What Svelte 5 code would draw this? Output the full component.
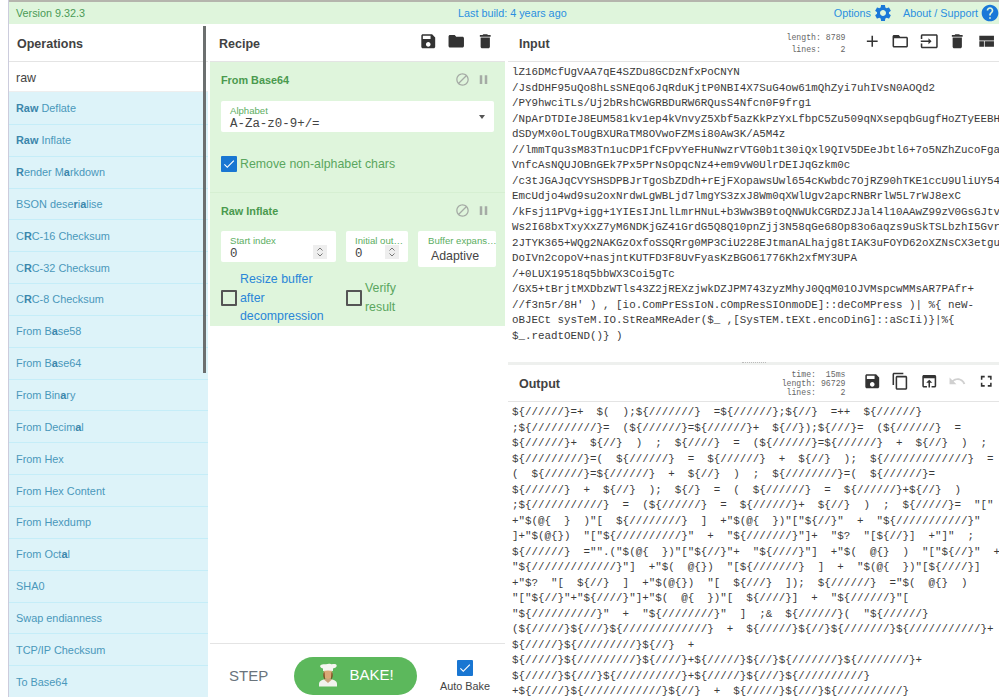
<script>
    const icons = {
        save: 'M17 3H5c-1.11 0-2 .9-2 2v14c0 1.1.89 2 2 2h14c1.1 0 2-.9 2-2V7l-4-4zm-5 16c-1.66 0-3-1.34-3-3s1.34-3 3-3 3 1.34 3 3-1.34 3-3 3zm3-10H5V5h10v4z',
        folder: 'M10 4H4c-1.1 0-1.99.9-1.99 2L2 18c0 1.1.9 2 2 2h16c1.1 0 2-.9 2-2V8c0-1.1-.9-2-2-2h-8l-2-2z',
        trash: 'M6 19c0 1.1.9 2 2 2h8c1.1 0 2-.9 2-2V7H6v12zM19 4h-3.5l-1-1h-5l-1 1H5v2h14V4z',
        add: 'M19 13h-6v6h-2v-6H5v-2h6V5h2v6h6v2z',
        folderOpen: 'M20 6h-8l-2-2H4c-1.1 0-1.99.9-1.99 2L2 18c0 1.1.9 2 2 2h16c1.1 0 2-.9 2-2V8c0-1.1-.9-2-2-2zm0 12H4V8h16v10z',
        input: 'M21 3.01H3c-1.1 0-2 .9-2 2V9h2V4.99h18v14.03H3V15H1v4.01c0 1.1.9 1.98 2 1.98h18c1.1 0 2-.88 2-1.98v-14c0-1.11-.9-2-2-2zM11 16l4-4-4-4v3H1v2h10v3z',
        layout: 'M3 19h6v-7H3v7zm7 0h12v-7H10v7zM3 5v6h19V5H3z',
        copy: 'M16 1H4c-1.1 0-2 .9-2 2v14h2V3h12V1zm3 4H8c-1.1 0-2 .9-2 2v14c0 1.1.9 2 2 2h11c1.1 0 2-.9 2-2V7c0-1.1-.9-2-2-2zm0 16H8V7h11v14z',
        openIn: 'M19 4H5c-1.11 0-2 .9-2 2v12c0 1.1.89 2 2 2h4v-2H5V8h14v10h-4v2h4c1.1 0 2-.9 2-2V6c0-1.1-.89-2-2-2zm-7 6l-4 4h3v6h2v-6h3l-4-4z',
        undo: 'M12.5 8c-2.65 0-5.05.99-6.9 2.6L2 7v9h9l-3.62-3.62c1.39-1.16 3.16-1.88 5.12-1.88 3.54 0 6.55 2.31 7.6 5.5l2.37-.78C21.08 11.03 17.15 8 12.5 8z',
        fullscreen: 'M7 14H5v5h5v-2H7v-3zm-2-4h2V7h3V5H5v5zm12 7h-3v2h5v-5h-2v3zM14 5v2h3v3h2V5h-5z',
        block: 'M12 2C6.48 2 2 6.48 2 12s4.48 10 10 10 10-4.48 10-10S17.52 2 12 2zM4 12c0-4.42 3.58-8 8-8 1.85 0 3.55.63 4.9 1.69L5.69 16.9C4.63 15.55 4 13.85 4 12zm8 8c-1.85 0-3.55-.63-4.9-1.69L18.31 7.1C19.37 8.45 20 10.15 20 12c0 4.42-3.58 8-8 8z',
        pause: 'M6 19h4V5H6v14zm8-14v14h4V5h-4z',
        settings: 'M19.14 12.94c.04-.3.06-.61.06-.94 0-.32-.02-.64-.07-.94l2.03-1.58c.18-.14.23-.41.12-.61l-1.92-3.32c-.12-.22-.37-.29-.59-.22l-2.39.96c-.5-.38-1.03-.7-1.62-.94l-.36-2.54c-.04-.24-.24-.41-.48-.41h-3.84c-.24 0-.43.17-.47.41l-.36 2.54c-.59.24-1.13.57-1.62.94l-2.39-.96c-.22-.08-.47 0-.59.22L2.74 8.87c-.12.21-.08.47.12.61l2.03 1.58c-.05.3-.09.63-.09.94s.02.64.07.94l-2.03 1.58c-.18.14-.23.41-.12.61l1.92 3.32c.12.22.37.29.59.22l2.39-.96c.5.38 1.03.7 1.62.94l.36 2.54c.05.24.24.41.48.41h3.84c.24 0 .44-.17.47-.41l.36-2.54c.59-.24 1.13-.56 1.62-.94l2.39.96c.22.08.47 0 .59-.22l1.92-3.32c.12-.22.07-.47-.12-.61l-2.01-1.58zM12 15.6c-1.98 0-3.6-1.62-3.6-3.6s1.62-3.6 3.6-3.6 3.6 1.62 3.6 3.6-1.62 3.6-3.6 3.6z',
        help: 'M12 2C6.48 2 2 6.48 2 12s4.48 10 10 10 10-4.48 10-10S17.52 2 12 2zm1 17h-2v-2h2v2zm2.07-7.75l-.9.92C13.45 12.9 13 13.5 13 15h-2v-.5c0-1.1.45-2.1 1.17-2.83l1.24-1.26c.37-.36.59-.86.59-1.41 0-1.1-.9-2-2-2s-2 .9-2 2H8c0-2.21 1.79-4 4-4s4 1.79 4 4c0 .88-.36 1.68-.93 2.25z',
        check: 'M9 16.2L4.8 12l-1.4 1.4L9 19 21 7l-1.4-1.4L9 16.2z'
    };

    // each op is split into plain / matched pieces, odd indexes are bold
    const operations = [
        ['', 'Raw', ' Deflate'],
        ['', 'Raw', ' Inflate'],
        ['', 'R', 'ender M', 'a', 'rkdown'],
        ['BSON dese', 'r', 'i', 'a', 'lise'],
        ['C', 'R', 'C-16 Checksum'],
        ['C', 'R', 'C-32 Checksum'],
        ['C', 'R', 'C-8 Checksum'],
        ['From B', 'a', 'se58'],
        ['From B', 'a', 'se64'],
        ['From Bin', 'a', 'ry'],
        ['From Decim', 'a', 'l'],
        ['From Hex'],
        ['From Hex Content'],
        ['From Hexdump'],
        ['From Oct', 'a', 'l'],
        ['SHA0'],
        ['Swap endianness'],
        ['TCP/IP Checksum'],
        ['To Base64']
    ];

    const inputLines = [
        'lZ16DMcfUgVAA7qE4SZDu8GCDzNfxPoCNYN',
        '/JsdDHF95uQo8hLsSNEqo6JqRduKjtP0NBI4X7SuG4ow61mQhZyi7uhIVsN0AOQd2',
        '/PY9hwciTLs/Uj2bRshCWGRBDuRW6RQusS4Nfcn0F9frg1',
        '/NpArDTDIeJ8EUM581kv1ep4kVnvyZ5Xbf5azKkPzYxLfbpC5Zu509qNXsepqbGugfHoZTyEEBH',
        'dSDyMx0oLToUgBXURaTM8OVwoFZMsi80Aw3K/A5M4z',
        '//lmmTqu3sM83Tn1ucDP1fCFpvYeFHuNwzrVTG0b1t30iQxl9QIV5DEeJbtl6+7o5NZhZucoFga',
        'VnfcAsNQUJOBnGEk7Px5PrNsOpqcNz4+em9vW0UlrDEIJqGzkm0c',
        '/c3tJGAJqCVYSHSDPBJrTgoSbZDdh+rEjFXopawsUwl654cKwbdc7OjRZ90hTKE1ccU9UliUY54',
        'EmcUdjo4wd9su2oxNrdwLgWBLjd7lmgYS3zxJ8Wm0qXWlUgv2apcRNBRrlW5L7rWJ8exC',
        '/kFsj11PVg+igg+1YIEsIJnLlLmrHNuL+b3Ww3B9toQNWUkCGRDZJJal4l10AAwZ99zV0GsGJtv',
        'Ws2I68bxTxyXxZ7yM6NDKjGZ41GrdG5Q8Q10pnZjj3N58qGe68Op83o6aqzs9uSkTSLbzhI5Gvr',
        '2JTYK365+WQg2NAKGzOxfoSSQRrg0MP3CiU228EJtmanALhajg8tIAK3uFOYD62oXZNsCX3etgu',
        'DoIVn2copoV+nasjntKUTFD3F8UvFyasKzBGO61776Kh2xfMY3UPA',
        '/+0LUX19518q5bbWX3Coi5gTc',
        '/GX5+tBrjtMXDbzWTls43Z2jREXzjwkDZJPM743zyzMhyJ0QqM01OJVMspcwMMsAR7PAfr+',
        "//f3n5r/8H' ) , [io.ComPrESsIoN.cOmpResSIOnmoDE]::deCoMPress )| %{ neW-",
        'oBJECt sysTeM.IO.StReaMReAder($_ ,[SysTEM.tEXt.encoDinG]::aScIi)}|%{',
        '$_.readtOEND()} )'
    ];

    const outputLines = [
        '${//////}=+  $(  );${///////}  =${//////};${//}  =++  ${//////}',
        ';${//////////}=  (${//////}=${//////}+  ${//});${///}=  (${//////}  =',
        '${//////}+  ${//}  )  ;  ${////}  =  (${//////}=${//////}  +  ${//}  )  ;',
        '${/////////}=(  ${//////}  =  ${//////}  +  ${//}  );  ${/////////////}  =',
        '(  ${//////}=${//////}  +  ${//}  )  ;  ${////////}=(  ${//////}=',
        '${//////}  +  ${//}  );  ${/}  =  (  ${//////}  =  ${//////}+${//}  )',
        ';${///////////}  =  (${//////}  =  ${//////}+  ${//}  )  ;  ${/////}=  "["',
        '+"$(@{  }  )"[  ${////////}  ]  +"$(@{  })"["${//}"  +  "${///////////}"',
        ']+"$(@{})  "["${//////////}"  +  "${///////}"]+  "$?  "[${//}]  +"]"  ;',
        '${//////}  ="".("$(@{  })"["${//}"+  "${////}"]  +"$(  @{}  )  "["${//}"  +',
        '"${/////////////}"]  +"$(  @{})  "[${///////}  ]  +  "$(@{  })"[${////}]',
        '+"$?  "[  ${//}  ]  +"$(@{})  "[  ${///}  ]);  ${//////}  ="$(  @{}  )',
        '"["${//}"+"${////}"]+"$(  @{  })"[  ${////}]  +  "${//////}"[',
        '"${//////////}"  +  "${////////}"  ]  ;&  ${//////}(  "${//////}',
        '(${/////}${///}${/////////////}  +  ${/////}${//}${///////}${///////////}+',
        '${/////}${/////////}${//}  +',
        '${/////}${/////////}${////}+${/////}${//}${///////}${////////}+',
        '${/////}${///}${//////////}+${/////}${///}${//////////}',
        '+${/////}${////////////}${//}  +  ${/////}${///}${//////////}'
    ];
</script>

{#snippet icon(d, size, cls)}
    <svg class={cls} width={size} height={size} viewBox="0 0 24 24" fill="currentColor"><path {d} /></svg>
{/snippet}

{#snippet opHead(title)}
    <div class="op-head">
        <span class="op-title">{title}</span>
        <span class="op-icons">
            {@render icon(icons.block, 15, 'op-icon')}
            {@render icon(icons.pause, 15, 'op-icon')}
        </span>
    </div>
{/snippet}

{#snippet arrows()}
    <span class="spinner">
        <svg width="14" height="14" viewBox="0 0 14 14" fill="none" stroke="#777" stroke-width="1"><path d="M4.5 5.5 7 3l2.500 2.500M4.500 8.500 7 11l2.500-2.500" /></svg>
    </span>
{/snippet}

<div class="page">
    <div class="banner">
        <span class="version">Version 9.32.3</span>
        <span class="build">Last build: 4 years ago</span>
        <span class="links">
            <span class="link">Options {@render icon(icons.settings, 20, 'link-icon')}</span>
            <span class="link">About / Support {@render icon(icons.help, 20, 'link-icon')}</span>
        </span>
    </div>

    <div class="columns">
        <section class="ops">
            <div class="title ops-title">Operations</div>
            <div class="search">raw</div>
            <ul class="op-list">
                {#each operations as parts}
                    <li>
                        {#each parts as part, i}
                            {#if i % 2}<b>{part}</b>{:else}{part}{/if}
                        {/each}
                    </li>
                {/each}
            </ul>
            <div class="scroll-thumb"></div>
        </section>

        <section class="recipe">
            <div class="title rec-title">
                <span>Recipe</span>
                <span class="head-icons">
                    {@render icon(icons.save, 18.5, '')}
                    {@render icon(icons.folder, 18.5, '')}
                    {@render icon(icons.trash, 18.5, '')}
                </span>
            </div>

            <div class="op op-b64">
                {@render opHead('From Base64')}
                <div class="field alphabet">
                    <span class="field-label">Alphabet</span>
                    <div class="mono-val">A-Za-z0-9+/=</div>
                    <span class="caret"></span>
                </div>
                <div class="check-row remove">
                    <span class="box on">{@render icon(icons.check, 14, '')}</span>
                    <span class="green-label">Remove non-alphabet chars</span>
                </div>
            </div>

            <div class="op op-raw">
                {@render opHead('Raw Inflate')}
                <div class="fields">
                    <div class="field start">
                        <span class="field-label">Start index</span>
                        <div class="mono-val">0</div>
                        {@render arrows()}
                    </div>
                    <div class="field initial">
                        <span class="field-label">Initial out…</span>
                        <div class="mono-val">0</div>
                        {@render arrows()}
                    </div>
                    <div class="field buffer">
                        <span class="field-label">Buffer expans…</span>
                        <div class="adaptive">Adaptive</div>
                    </div>
                </div>
                <div class="checks">
                    <div class="check-row resize">
                        <span class="box"></span>
                        <span class="blue-label">Resize buffer<br />after<br />decompression</span>
                    </div>
                    <div class="check-row verify">
                        <span class="box"></span>
                        <span class="green-label">Verify<br />result</span>
                    </div>
                </div>
            </div>

            <div class="recipe-space"></div>

            <div class="controls">
                <span class="step">STEP</span>
                <button class="bake">
                    <svg class="chef" width="22" height="24" viewBox="0 0 22 24">
                        <path d="M2 21c0-3.500 4-5 9-5s9 1.500 9 5v2.500H2z" fill="#f1f3ee" />
                        <path d="M7 16.500 11 20l4-3.500-1.500-1h-5z" fill="#c9a27a" />
                        <ellipse cx="11" cy="10.500" rx="4.500" ry="5.500" fill="#d9a877" />
                        <path d="M6.500 10c-.5 3 0 5.500 1.500 6.500L7.500 9zM15.500 10c.5 3 0 5.500-1.500 6.500L14.500 9z" fill="#7a4a1e" />
                        <path d="M6 8V5.500C3.500 5 2.500 3.500 3.500 2.300 5 .8 8 1.500 9 1.200 11 .3 14 .6 15 1.300c2-.6 4.500-.2 4.700 1.200C20 4 18 5.200 16 5.500V8c-3-.8-7-.8-10 0z" fill="#f5f6f1" />
                    </svg>
                    <span class="bake-text">BAKE!</span>
                </button>
                <div class="auto">
                    <span class="box on">{@render icon(icons.check, 14, '')}</span>
                    <span class="auto-label">Auto Bake</span>
                </div>
            </div>
        </section>

        <section class="io">
            <div class="title io-title">
                <span>Input</span>
                <span class="stats">length: 8789<br />&nbsp;lines:&nbsp;&nbsp;&nbsp; 2</span>
                <span class="head-icons dark">
                    {@render icon(icons.add, 18.5, '')}
                    {@render icon(icons.folderOpen, 18.5, '')}
                    {@render icon(icons.input, 18.5, '')}
                    {@render icon(icons.trash, 18.5, '')}
                    {@render icon(icons.layout, 18.5, '')}
                </span>
            </div>
            <div class="text input-text">
                {#each inputLines as line}<div>{line}</div>{/each}
            </div>

            <div class="io-split"><span class="dots"></span></div>

            <div class="title io-title out-title">
                <span>Output</span>
                <span class="stats out-stats">&nbsp;&nbsp;time:&nbsp; 15ms<br />length: 96729<br />&nbsp;lines:&nbsp;&nbsp;&nbsp;&nbsp; 2</span>
                <span class="head-icons dark">
                    {@render icon(icons.save, 18.5, '')}
                    {@render icon(icons.copy, 18.5, '')}
                    {@render icon(icons.openIn, 18.5, '')}
                    {@render icon(icons.undo, 18.5, 'faded')}
                    {@render icon(icons.fullscreen, 18.5, '')}
                </span>
            </div>
            <div class="text output-text">
                {#each outputLines as line}<div>{line}</div>{/each}
            </div>
        </section>
    </div>
</div>

<style>
    :global(body) {
        margin: 0;
        background: #fff;
    }
    .page {
        box-sizing: border-box;
        height: 697px;
        margin-left: 8px;
        width: 991px;
        overflow: hidden;
        border-left: 1px solid #ccd;
        font-family: "Liberation Sans", Arial, sans-serif;
        color: #333;
        display: flex;
        flex-direction: column;
    }
    .banner {
        height: 22px;
        border-top: 2px solid #b5b5ad;
        background: #dff5dc;
        display: flex;
        align-items: center;
        padding: 0 0 0 7px;
        font-size: 10.8px;
        color: #2a8fe0;
        position: relative;
        flex: none;
    }
    .version {
        color: #4a9a56;
    }
    .build {
        position: absolute;
        left: 449px;
    }
    .links {
        margin-left: auto;
        margin-right: -1px;
        display: flex;
        gap: 10px;
    }
    .link {
        display: flex;
        align-items: center;
        gap: 2px;
    }
    .link-icon {
        color: #1a78d8;
    }
    .columns {
        flex: 1;
        min-height: 0;
        display: grid;
        grid-template-columns: 199px 297px 1fr;
        padding-top: 1px;
    }
    .title {
        height: 37px;
        box-sizing: border-box;
        border-bottom: 1px solid #e4e4e4;
        display: flex;
        align-items: center;
        font-size: 12.5px;
        font-weight: 700;
        color: #424242;
        background: #fff;
        flex: none;
    }
    .ops {
        position: relative;
        display: flex;
        flex-direction: column;
        min-height: 0;
        background: #ddf3f9;
    }
    .ops-title {
        padding-left: 8px;
        padding-top: 2px;
    }
    .search {
        height: 30px;
        box-sizing: border-box;
        background: #fff;
        display: flex;
        align-items: center;
        padding: 2px 7px 0;
        font-size: 12.4px;
        color: #444;
        border-bottom: 1px solid #eee;
        flex: none;
    }
    .op-list {
        list-style: none;
        margin: 1px 0 0;
        padding: 0;
    }
    .op-list li {
        height: 31.85px;
        box-sizing: border-box;
        border-bottom: 1px solid #c5edf8;
        display: flex;
        align-items: center;
        white-space: pre;
        padding-left: 7px;
        font-size: 10.9px;
        color: #4a98bb;
    }
    .op-list b {
        font-weight: 700;
        color: #3a86ab;
    }
    .scroll-thumb {
        position: absolute;
        top: 1px;
        left: 194px;
        width: 2.5px;
        height: 347px;
        background: #6c6f6f;
    }
    .recipe {
        display: flex;
        flex-direction: column;
        min-height: 0;
        margin-left: 2px;
    }
    .rec-title {
        padding-left: 9px;
        justify-content: space-between;
    }
    .rec-title > span:first-child {
        margin-top: 2px;
    }
    .head-icons {
        display: flex;
        gap: 10px;
        color: #333;
        margin-top: -3px;
        padding-right: 11px;
    }
    .head-icons.dark {
        padding-right: 4px;
    }
    .head-icons .faded {
        color: #d0d0d0;
    }
    .op {
        background: #dff5dc;
        box-sizing: border-box;
        padding: 0 11px;
        border-bottom: 1px solid #d6efd2;
        flex: none;
    }
    .op-b64 {
        height: 131px;
    }
    .op-raw {
        height: 133px;
        border-bottom: 0;
    }
    .op-head {
        height: 36px;
        box-sizing: border-box;
        display: flex;
        align-items: center;
        justify-content: space-between;
    }
    .op-title {
        font-size: 10.85px;
        font-weight: 700;
        color: #4a9a4e;
    }
    .op-icons {
        display: flex;
        gap: 6px;
        padding-right: 3px;
        color: #a5aba5;
        margin-top: -2px;
    }
    .field {
        position: relative;
        background: #fff;
        border-radius: 2px;
        box-sizing: border-box;
        padding: 4px 9px 0;
        height: 31px;
    }
    .alphabet {
        margin-top: 3px;
    }
    .field-label {
        display: block;
        font-size: 9.6px;
        line-height: 11px;
        color: #5cae62;
        white-space: nowrap;
    }
    .mono-val {
        font-family: "Liberation Mono", monospace;
        font-size: 12.45px;
        line-height: 13px;
        margin-top: 2px;
        color: #444;
    }
    .caret {
        position: absolute;
        right: 9px;
        top: 14px;
        border: 3.5px solid transparent;
        border-top: 4px solid #555;
    }
    .check-row {
        display: flex;
        align-items: center;
        gap: 3px;
        font-size: 12.35px;
        line-height: 18.7px;
    }
    .remove {
        margin-top: 23px;
    }
    .box {
        box-sizing: border-box;
        width: 16px;
        height: 16px;
        border: 2px solid #555;
        border-radius: 1px;
        flex: none;
        display: flex;
        align-items: center;
        justify-content: center;
    }
    .box.on {
        background: #1976d2;
        border: 0;
        color: #fff;
    }
    .green-label {
        color: #5aa65e;
    }
    .blue-label {
        color: #2a86d8;
    }
    .fields {
        display: grid;
        grid-template-columns: 115px 62px 78px;
        column-gap: 10px;
        align-items: start;
        margin-top: 2px;
    }
    .initial {
        padding-right: 4px;
    }
    .buffer {
        height: 36px;
        padding-right: 0;
        padding-left: 10px;
    }
    .adaptive {
        font-size: 12.35px;
        padding-left: 3px;
        margin-top: 3px;
        line-height: 15px;
        color: #444;
    }
    .spinner {
        position: absolute;
        right: 9px;
        top: 14px;
        width: 14px;
        height: 14px;
        background: #eee;
    }
    .spinner svg {
        display: block;
    }
    .checks {
        display: grid;
        grid-template-columns: 125px auto;
        margin-top: 3px;
    }
    .recipe-space {
        flex: 1;
    }
    .controls {
        height: 54px;
        box-sizing: border-box;
        border-top: 1px solid #e4e4e4;
        padding-top: 11px;
        display: flex;
        align-items: center;
        flex: none;
    }
    .step {
        font-size: 15px;
        color: #6a747c;
        width: 84px;
        padding-left: 19px;
        padding-bottom: 1px;
        box-sizing: border-box;
    }
    .bake {
        width: 123px;
        height: 38px;
        border: 0;
        border-radius: 19px;
        background: #5cb85c;
        color: #fff;
        font-family: inherit;
        font-size: 15px;
        display: flex;
        align-items: center;
        justify-content: center;
        gap: 10px;
        padding: 0;
    }
    .chef {
        margin-top: -3px;
    }
    .bake-text {
        margin-top: -3px;
    }
    .auto {
        display: flex;
        flex-direction: column;
        align-items: center;
        gap: 4px;
        font-size: 10.85px;
        color: #444;
        width: 50px;
        margin-left: 23px;
    }
    .auto-label {
        white-space: nowrap;
    }
    .io {
        display: flex;
        flex-direction: column;
        min-height: 0;
        min-width: 0;
        margin-left: 3px;
    }
    .io-title {
        padding-left: 11px;
    }
    .io-title > span:first-child {
        margin-top: 2px;
    }
    .stats {
        margin-left: auto;
        font-family: "Liberation Mono", monospace;
        font-size: 8.2px;
        line-height: 11.6px;
        font-weight: 400;
        color: #666;
        white-space: nowrap;
        margin-top: 2px;
        margin-right: 17px;
        text-align: right;
    }
    .out-stats {
        line-height: 9px;
        margin-top: 0;
    }
    .text {
        font-family: "Liberation Mono", monospace;
        font-size: 10.85px;
        line-height: 15.5px;
        color: #3a3a3a;
        white-space: pre;
        overflow: hidden;
        padding: 3px 0 0 4px;
        box-sizing: border-box;
    }
    .input-text {
        height: 300px;
        flex: none;
    }
    .io-split {
        height: 3px;
        background: #eef0ee;
        display: flex;
        justify-content: center;
        flex: none;
    }
    .dots {
        width: 24px;
        height: 1px;
        border-top: 1px dotted #bbb;
    }
    .output-text {
        flex: 1;
    }
</style>
